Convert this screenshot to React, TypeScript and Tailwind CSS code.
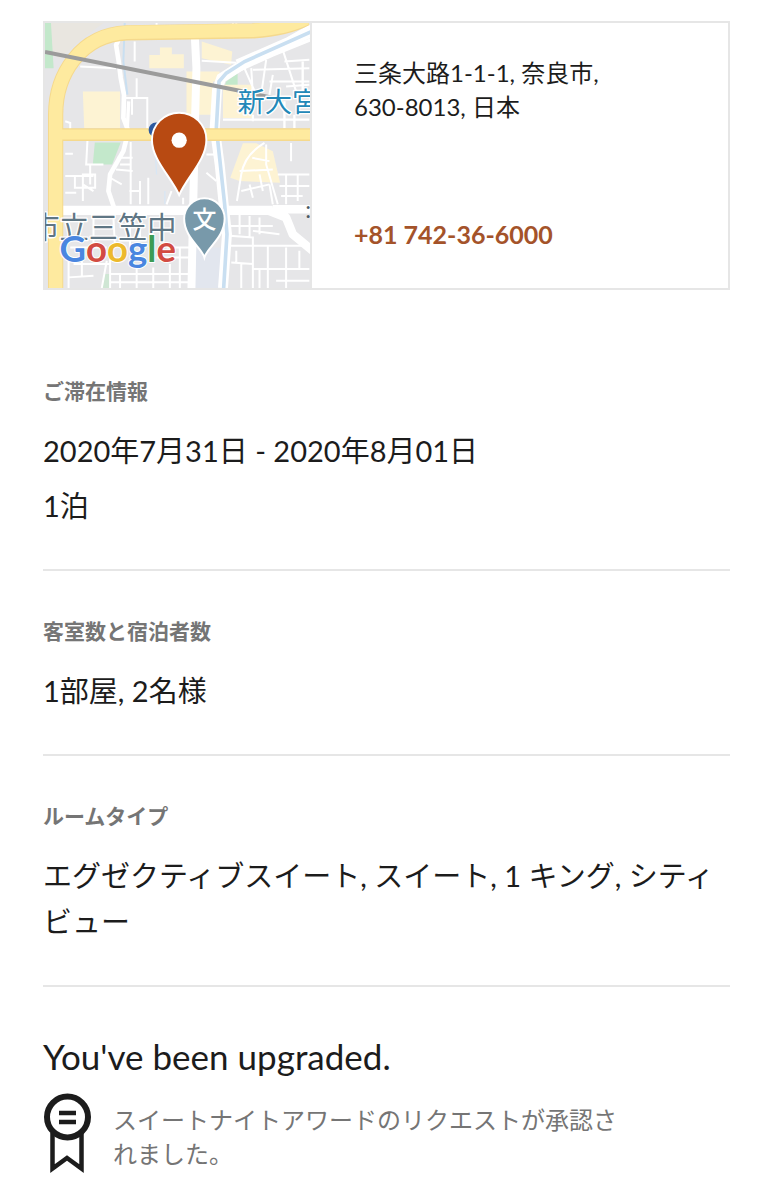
import type { ReactNode } from "react";

const FONT = "font-[Lato,'Noto_Sans_CJK_JP',sans-serif]";

interface StaySectionProps {
  title: string;
  children: ReactNode;
}

function StaySection({ title, children }: StaySectionProps) {
  return (
    <section className="border-b-2 border-[#e6e6e6] pt-11 pb-10">
      <h2 className="mb-[21px] text-[21px] leading-8 font-bold text-[#757575]">
        {title}
      </h2>
      <div className="flex flex-col gap-[9px] text-[29px] leading-[46px]">
        {children}
      </div>
    </section>
  );
}

function HotelMap() {
  return (
    <svg
      viewBox="14 14 798 798"
      className="block size-[265px] overflow-hidden"
      role="img"
      aria-label="地図"
    >
      <rect x="0" y="0" width="830" height="830" fill="#e6e6e8" />
      {/* parks and blocks */}
      <path d="M14 14H190L120 65L60 120L14 100Z" fill="#e9e6e0" />
      <path d="M14 14H32L40 150H14Z" fill="#c3e8cb" />
      <path d="M164 374H242L216 440H158Z" fill="#c3e8cb" />
      <path d="M560 190L594 165V205L556 200Z" fill="#c3e8cb" />
      <path d="M190 770H212V812H186Z" fill="#cfe6d4" />
      <g fill="#fdf3d3">
        <path d="M128 220H240V330H132Z" />
        <path d="M328 110H360V88H396V108H432V150H328Z" />
        <path d="M486 70L578 100L574 140L486 120Z" />
        <path d="M440 160H540V190H520V290H440Z" />
        <path d="M550 200H640V300H550Z" />
        <path d="M610 376L650 376L700 400L722 495L600 490L572 480Z" />
      </g>
      <path d="M470 690H545V812H455Z" fill="#e2e6ee" />

      {/* small streets */}
      <g fill="none" stroke="#fff" strokeWidth="6">
        <path d="M120 145L228 150M255 240H322V345M290 180V240M284 70V130" />
        <path d="M75 310L90 315V335M75 408H98M142 365L138 440H190M276 240V290" />
        <path d="M75 475H160M104 475V510H165V470H128V550M75 525H108M150 440V500M128 500L160 520" />
        <path d="M232 420H278M228 455L278 460M240 440H275M272 372V560M210 480L245 500M300 490V560M268 520H300M325 480V560" />
        <path d="M345 380L350 470M375 520V560" stroke="#d8e6f4" strokeWidth="4" />
        <path d="M395 520L380 560M430 540V560M500 465L530 490M500 410H525" />
        <path d="M580 40V14M590 14V30M350 14V28M486 128L590 134" />
        <path d="M635 150L640 230M680 125L665 230M610 140L650 230M730 95L775 235M735 130L810 125M640 155L810 150M690 190H810M740 205L810 200M700 170L690 230" />
        <path d="M550 305H810M735 250V330M765 290V330M640 290V310M790 130V230" strokeWidth="7" />
        <path d="M675 375Q615 410 605 470L592 550M680 380V440L715 560M638 420L690 430M600 460L700 455M605 520L690 500M640 540L630 500M660 470L670 520" />
        <path d="M755 375V430M715 470H810M740 470V560M775 470V550M720 505H810M725 535H790M700 560L690 500" />
        <path d="M570 655L640 660V812M600 590V650M630 595V660M660 600V650M570 685H810M685 685V812M575 735L640 740M640 755H810M720 650L640 640M740 690V812M780 700V755M570 625H700M590 700V740M605 740V812M660 755V812M710 790H810" />
        <path d="M85 720V812M125 700V780M100 740H210M85 780L160 775M210 690V812M210 770H450M240 770V812M290 740V812M340 750V812M390 740V812M210 795H450M160 600V680M220 600L225 690M300 600V660M380 690H450M420 690V812M90 690H200M350 720H450M200 730L185 812M270 590V690" />
      </g>

      {/* streets */}
      <g fill="none" stroke="#fff" strokeLinejoin="round">
        <path d="M242 50L228 80L236 130L242 180L252 230L250 300L265 340L250 400L210 470L205 520L222 570" strokeWidth="14" />
        <path d="M266 250L262 330" strokeWidth="10" />
        <path d="M465 50L470 150L465 340L460 580L455 812" strokeWidth="24" />
        <path d="M60 578H700" strokeWidth="28" />
        <path d="M690 580L740 600L760 650L820 700M700 575H820" strokeWidth="26" />
        <path d="M590 130L740 65L820 20" strokeWidth="12" />
        <path d="M590 160L700 110L820 62" strokeWidth="10" />
      </g>
      {/* canal */}
      <g fill="none">
        <path d="M820 40L620 132L545 180L532 215L525 330L540 440L552 560L562 650L550 812" stroke="#fff" strokeWidth="30" />
        <path d="M820 38L615 130L560 165L538 190L530 330L542 440L555 560L562 650L552 812" stroke="#c9dff1" strokeWidth="11" />
        <path d="M254 14L250 130L262 230" stroke="#c9dff1" strokeWidth="6" />
      </g>

      {/* main roads */}
      <g fill="none" strokeLinejoin="round">
        <path d="M46 830V290C46 170 120 50 260 44L640 38Q740 32 800 0" stroke="#f5d98d" strokeWidth="46" />
        <path d="M40 350H820" stroke="#f5d98d" strokeWidth="38" />
        <path d="M46 830V290C46 170 120 50 260 42L640 36Q740 30 800 0" stroke="#feea9f" strokeWidth="40" />
        <path d="M40 350H820" stroke="#feea9f" strokeWidth="30" />
        <path d="M452 350V333H488V370H452Z" fill="#fff3bf" />
      </g>
      {/* railway */}
      <path d="M14 101L600 218L700 240" fill="none" stroke="#9b9b9b" strokeWidth="12" />

      {/* place names */}
      <g
        fontFamily="'Noto Sans CJK JP', sans-serif"
        stroke="#fff"
        strokeWidth="8"
        strokeLinejoin="round"
        paintOrder="stroke"
      >
        <text x="594" y="283" fontSize="82" fill="#2288b8">
          新大宮
        </text>
        <text x="-30" y="660" fontSize="88" fill="#5f7684">
          市立三笠中
        </text>
      </g>
      <text x="798" y="600" fontSize="70" fill="#4b5a63">
        :
      </text>

      {/* school pin */}
      <path
        d="M494 720C486 690 433 660 433 603A61 61 0 0 1 555 603C555 660 502 690 494 720Z"
        fill="#7899aa"
        stroke="#fff"
        strokeWidth="6"
      />
      <text
        x="494"
        y="631"
        fontSize="72"
        fontWeight="500"
        textAnchor="middle"
        fill="#fff"
        fontFamily="'Noto Sans CJK JP', sans-serif"
      >
        文
      </text>

      {/* hotel pin */}
      <circle cx="348" cy="336" r="22" fill="#2c5aa0" />
      <path
        d="M418 532C396 480 336 426 336 366A82 82 0 0 1 500 366C500 426 440 480 418 532Z"
        fill="#b84a12"
        stroke="#fff"
        strokeWidth="6"
      />
      <circle cx="418" cy="367" r="23" fill="#fff" />

      <text
        x="58"
        y="733"
        fontSize="110"
        fontWeight="700"
        fontFamily="Lato, sans-serif"
        stroke="#fff"
        strokeWidth="6"
        strokeLinejoin="round"
        paintOrder="stroke"
      >
        <tspan fill="#4a86e0">G</tspan>
        <tspan fill="#d24b42">o</tspan>
        <tspan fill="#ecb92c">o</tspan>
        <tspan fill="#4a86e0">g</tspan>
        <tspan fill="#3d9b54">l</tspan>
        <tspan fill="#d24b42">e</tspan>
      </text>
    </svg>
  );
}

function AwardIcon() {
  return (
    <svg
      viewBox="0 0 48 80"
      className="h-20 w-12 shrink-0"
      fill="none"
      stroke="#1c1c1c"
      aria-hidden="true"
    >
      <path d="M9.500 40V75.500L24 65L38.500 75.500V40" strokeWidth="4.500" />
      <circle cx="24.500" cy="24" r="20.500" strokeWidth="6" fill="#fff" />
      <path d="M16 20H33M16 29H33" strokeWidth="4.500" />
    </svg>
  );
}

export default function App() {
  return (
    <main
      lang="ja"
      className={`${FONT} bg-white px-[43px] pt-[21px] pb-6 text-[#1c1c1c]`}
    >
      <div className="flex border-2 border-[#e6e6e6]">
        <div className="shrink-0 border-r-2 border-[#e6e6e6]">
          <HotelMap />
        </div>
        <div className="flex flex-1 flex-col justify-between px-[42px] pt-[33px] pb-[37px]">
          <address className="text-[24px] leading-[34px] not-italic">
            三条大路1-1-1, 奈良市,
            <br />
            630-8013, 日本
          </address>
          <a
            href="tel:+81742366000"
            className="text-[25px] leading-[34px] font-bold text-[#a4532a]"
          >
            +81 742-36-6000
          </a>
        </div>
      </div>

      <div className="mt-[41px]">
        <StaySection title="ご滞在情報">
          <p>2020年7月31日 - 2020年8月01日</p>
          <p>1泊</p>
        </StaySection>
        <StaySection title="客室数と宿泊者数">
          <p>1部屋, 2名様</p>
        </StaySection>
        <StaySection title="ルームタイプ">
          <p>エグゼクティブスイート, スイート, 1 キング, シティビュー</p>
        </StaySection>
      </div>

      <section className="pt-11">
        <h2 className="text-[35px] leading-[50px]">You've been upgraded.</h2>
        <div className="mt-3 flex items-start gap-[22px]">
          <AwardIcon />
          <p className="max-w-[520px] pt-[10px] text-[24px] leading-[34px] text-[#757575]">
            スイートナイトアワードのリクエストが承認されました。
          </p>
        </div>
      </section>
    </main>
  );
}
